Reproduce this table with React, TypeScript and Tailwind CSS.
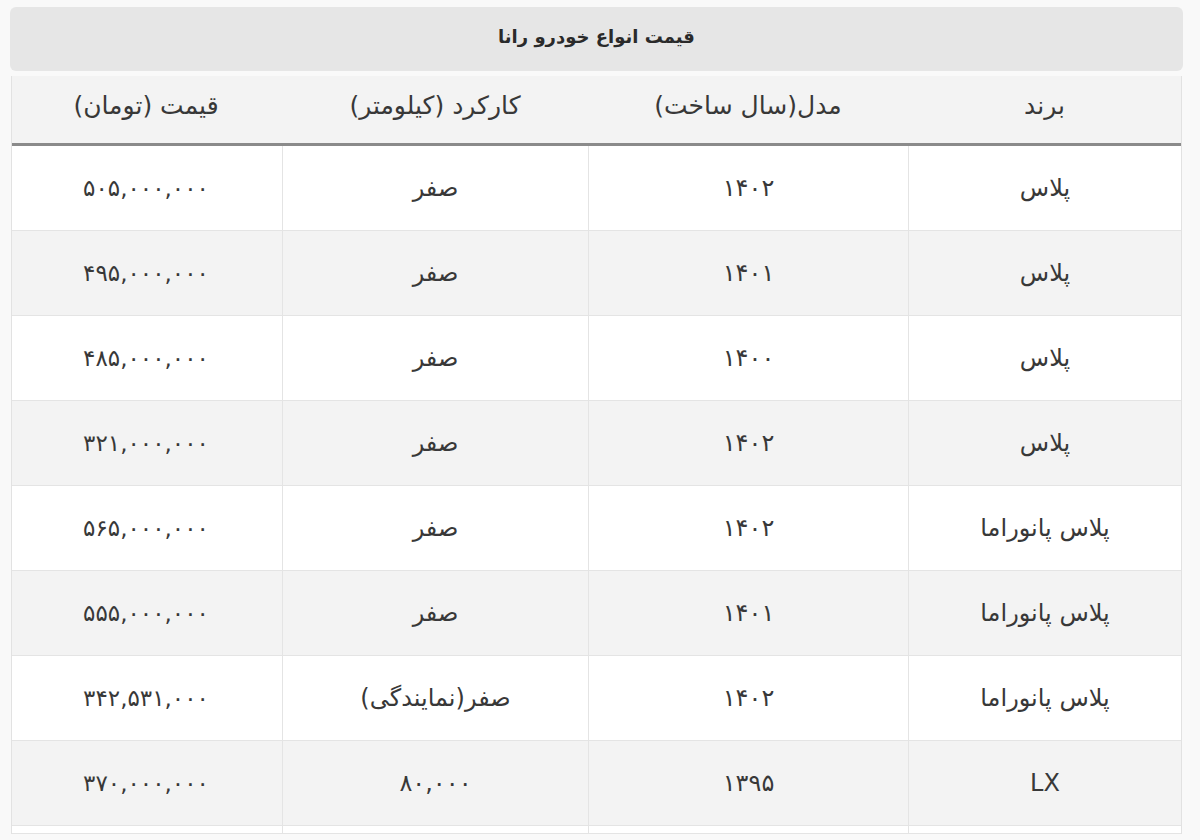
const rows = [
  { brand: 'پلاس', model: '۱۴۰۲', km: 'صفر', price: '۵۰۵,۰۰۰,۰۰۰' },
  { brand: 'پلاس', model: '۱۴۰۱', km: 'صفر', price: '۴۹۵,۰۰۰,۰۰۰' },
  { brand: 'پلاس', model: '۱۴۰۰', km: 'صفر', price: '۴۸۵,۰۰۰,۰۰۰' },
  { brand: 'پلاس', model: '۱۴۰۲', km: 'صفر', price: '۳۲۱,۰۰۰,۰۰۰' },
  { brand: 'پلاس پانوراما', model: '۱۴۰۲', km: 'صفر', price: '۵۶۵,۰۰۰,۰۰۰' },
  { brand: 'پلاس پانوراما', model: '۱۴۰۱', km: 'صفر', price: '۵۵۵,۰۰۰,۰۰۰' },
  { brand: 'پلاس پانوراما', model: '۱۴۰۲', km: 'صفر(نمایندگی)', price: '۳۴۲,۵۳۱,۰۰۰' },
  { brand: 'LX', model: '۱۳۹۵', km: '۸۰,۰۰۰', price: '۳۷۰,۰۰۰,۰۰۰' },
]

const cols = 'grid grid-cols-[273px_320px_306px_272px]'

export default function App() {
  return (
    <div
      dir="rtl"
      className="min-h-[840px] bg-[#f9f9f9] pt-[7px] pl-[10px] pr-[17px] text-[#383838]"
      style={{ fontFamily: '"DejaVu Sans", "Noto Sans", sans-serif' }}
    >
      {/* Title */}
      <div className="flex h-[64px] items-center justify-center rounded-md bg-[#e6e6e6] pb-[5px] text-[18px] font-bold text-[#2a2a2a]">
        قیمت انواع خودرو رانا
      </div>

      {/* Table */}
      <div className="mx-px mt-[5px] border-x border-[#e2e2e2]">
        <div className={`${cols} h-[70px] items-center border-b-[3px] border-[#8a8a8a] bg-[#f3f3f3] pb-[7px] text-[25px]`}>
          <div className="text-center">برند</div>
          <div className="text-center">مدل(سال ساخت)</div>
          <div className="text-center">کارکرد (کیلومتر)</div>
          <div className="text-center">قیمت (تومان)</div>
        </div>

        {rows.map((r, i) => (
          <div
            key={i}
            className={`${cols} h-[85px] border-b border-[#e4e4e4] text-[24px] ${i % 2 === 1 ? 'bg-[#f3f3f3]' : 'bg-white'}`}
          >
            <div className="flex items-center justify-center border-l border-[#e4e4e4]">{r.brand}</div>
            <div className="flex items-center justify-center border-l border-[#e4e4e4]">{r.model}</div>
            <div className="flex items-center justify-center border-l border-[#e4e4e4]">{r.km}</div>
            <div className="flex items-center justify-center text-[23px]">{r.price}</div>
          </div>
        ))}
        <div className={`${cols} h-[8px] border-b border-[#e4e4e4] bg-white`}>
          <div className="border-l border-[#e4e4e4]" />
          <div className="border-l border-[#e4e4e4]" />
          <div className="border-l border-[#e4e4e4]" />
          <div />
        </div>
      </div>
    </div>
  )
}
